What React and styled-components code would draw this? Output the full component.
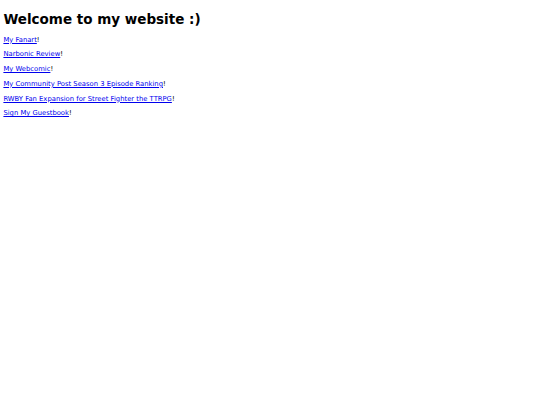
import React from "react";
import styled, { createGlobalStyle } from "styled-components";

const Global = createGlobalStyle`
  html, body { margin: 0; padding: 0; background: #fff; }
  body { font-family: "DejaVu Sans", sans-serif; color: #000; }
`;

const Page = styled.div`
  padding: 2.6px 3.4px;
  font-size: 6.8px;
`;

const Title = styled.h1`
  font-size: 13.5px;
  font-weight: bold;
  margin: 8.6px 0;
`;

const Item = styled.p`
  margin: 6.7px 0;
`;

const Link = styled.a`
  color: #0000ee;
  text-decoration: underline;
`;

const links = [
  "My Fanart",
  "Narbonic Review",
  "My Webcomic",
  "My Community Post Season 3 Episode Ranking",
  "RWBY Fan Expansion for Street Fighter the TTRPG",
  "Sign My Guestbook",
];

export default function App() {
  return (
    <>
      <Global />
      <Page>
        <Title>Welcome to my website :)</Title>
        {links.map((l) => (
          <Item key={l}>
            <Link href="#">{l}</Link>!
          </Item>
        ))}
      </Page>
    </>
  );
}
